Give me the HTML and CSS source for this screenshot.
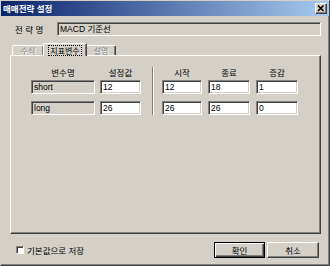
FILE: index.html
```html
<!DOCTYPE html>
<html lang="ko">
<head>
    <meta charset="UTF-8">
    <title>매매전략 설정</title>
    <link rel="stylesheet" href="styles.css">
</head>
<body>
    <div class="window">
        <div class="titlebar">
            <span class="title">매매전략 설정</span>
            <div class="close-btn">
                <svg width="10" height="9" viewBox="0 0 10 9">
                    <path d="M2 1.5 L7.5 7 M7.5 1.5 L2 7" stroke="#000" stroke-width="1.6" fill="none"/>
                </svg>
            </div>
        </div>

        <div class="name-row">
            <label class="name-label">전 략 명</label>
            <div class="name-input">MACD 기준선</div>
        </div>

        <div class="tabs">
            <div class="tab tab-formula">수식</div>
            <div class="tab tab-params active"><span class="focus">지표변수</span></div>
            <div class="tab tab-desc">설명</div>
        </div>

        <div class="panel">
            <div class="params">
                <div class="group group-left">
                    <div class="head-row">
                        <span class="col-name">변수명</span>
                        <span class="col-val">설정값</span>
                    </div>
                    <div class="field-row">
                        <div class="field readonly col-name">short</div>
                        <div class="field col-val">12</div>
                    </div>
                    <div class="field-row second">
                        <div class="field readonly col-name">long</div>
                        <div class="field col-val">26</div>
                    </div>
                </div>

                <div class="vsep"></div>

                <div class="group group-right">
                    <div class="head-row">
                        <span class="col-start">시작</span>
                        <span class="col-end">종료</span>
                        <span class="col-step">증감</span>
                    </div>
                    <div class="field-row">
                        <div class="field col-start">12</div>
                        <div class="field col-end">18</div>
                        <div class="field col-step">1</div>
                    </div>
                    <div class="field-row second">
                        <div class="field col-start">26</div>
                        <div class="field col-end">26</div>
                        <div class="field col-step">0</div>
                    </div>
                </div>
            </div>
        </div>

        <div class="bottom-row">
            <div class="checkbox"></div>
            <span class="check-label">기본값으로 저장</span>
            <div class="buttons">
                <button class="btn default ok">확인</button>
                <button class="btn cancel">취소</button>
            </div>
        </div>
    </div>
</body>
</html>
```

FILE: styles.css
```css
body {
    margin: 0;
    font-family: "Noto Sans CJK KR", sans-serif;
    font-size: 8.5px;
    color: #000;
}

.window {
    width: 330px;
    height: 266px;
    box-sizing: border-box;
    background-color: #d4d0c8;
    border: 1px solid;
    border-color: #d4d0c8 #404040 #404040 #d4d0c8;
    box-shadow: inset -1px -1px #808080;
}

.titlebar {
    display: flex;
    align-items: center;
    height: 15px;
    padding: 0 2px 0 2px;
    background: linear-gradient(to right, #0a246a, #a6caf0);
}

.title {
    color: #fff;
    font-weight: bold;
    line-height: 15px;
}

.close-btn {
    margin-left: auto;
    width: 12px;
    height: 11px;
    box-sizing: border-box;
    background-color: #d4d0c8;
    border: 1px solid;
    border-color: #fff #404040 #404040 #fff;
    box-shadow: inset -1px -1px #808080;
    display: flex;
    align-items: center;
    justify-content: center;
}

.close-btn svg {
    display: block;
}

.name-row {
    display: flex;
    align-items: center;
    margin-top: 6px;
    height: 14px;
    padding-left: 14px;
}

.name-label {
    width: 42px;
    line-height: 14px;
}

.name-input {
    width: 264px;
    height: 14px;
    box-sizing: border-box;
    border: 1px solid;
    border-color: #808080 #fff #fff #808080;
    box-shadow: inset 1px 1px #404040, inset -1px -1px #d4d0c8;
    font-family: "Liberation Sans", "Noto Sans CJK KR", sans-serif;
    font-size: 8.5px;
    line-height: 11px;
    padding: 1px 0 0 2px;
}

.tabs {
    display: flex;
    align-items: flex-end;
    height: 12px;
    margin-top: 7px;
    margin-left: 11px;
}

.tab {
    box-sizing: border-box;
    height: 10px;
    border: 1px solid;
    border-bottom: 0;
    border-color: #fff #404040 #fff #fff;
    box-shadow: inset -1px 0 #808080;
    border-radius: 2px 2px 0 0;
    display: flex;
    justify-content: center;
    align-items: center;
    font-size: 8px;
    line-height: 9px;
    color: #808080;
    text-shadow: 1px 1px #fff;
}

.tab-formula {
    width: 32px;
}

.tab-desc {
    width: 30px;
}

.tab.active {
    width: 44px;
    height: 13px;
    margin: 0 -1px -1px -1px;
    position: relative;
    z-index: 1;
    background-color: #d4d0c8;
    color: #000;
    text-shadow: none;
    align-items: flex-start;
    padding-top: 2px;
}

.focus {
    display: block;
    height: 9px;
    line-height: 9px;
    padding: 0 1px;
    outline: 1px dotted #000;
}

.panel {
    box-sizing: border-box;
    width: 311px;
    height: 179px;
    margin-left: 9px;
    border: 1px solid;
    border-color: #fff #404040 #404040 #fff;
    box-shadow: inset -1px -1px #808080;
}

.params {
    display: flex;
    padding: 10px 0 0 20px;
}

.group {
    display: flex;
    flex-direction: column;
}

.head-row,
.field-row {
    display: flex;
}

.group-left .head-row,
.group-left .field-row {
    gap: 5px;
}

.group-right .head-row,
.group-right .field-row {
    gap: 6px;
}

.head-row {
    height: 12px;
    line-height: 12px;
    margin-bottom: 2px;
}

.head-row span {
    text-align: center;
}

.field-row.second {
    margin-top: 7px;
}

.col-name { width: 64px; }
.col-val { width: 41px; }
.col-start { width: 40px; }
.col-end { width: 42px; }
.col-step { width: 42px; }

.field {
    box-sizing: border-box;
    height: 14px;
    border: 1px solid;
    border-color: #808080 #fff #fff #808080;
    box-shadow: inset 1px 1px #404040, inset -1px -1px #d4d0c8;
    background-color: #fff;
    font-family: "Liberation Sans", sans-serif;
    font-size: 8.5px;
    line-height: 11px;
    padding: 1px 0 0 2px;
}

.field.readonly {
    background-color: #d4d0c8;
}

.vsep {
    width: 0;
    margin: 1px 8px 0 11px;
    border-left: 1px solid #808080;
    border-right: 1px solid #fff;
}

.bottom-row {
    display: flex;
    align-items: center;
    height: 16px;
    margin-top: 8px;
    padding: 0 10px 0 15px;
}

.checkbox {
    width: 8px;
    height: 8px;
    box-sizing: border-box;
    background-color: #fff;
    border: 1px solid;
    border-color: #808080 #fff #fff #808080;
    box-shadow: inset 1px 1px #404040;
}

.check-label {
    margin-left: 3px;
    line-height: 12px;
}

.buttons {
    display: flex;
    gap: 2px;
    margin-left: auto;
}

.btn {
    box-sizing: border-box;
    height: 16px;
    padding: 0;
    background-color: #d4d0c8;
    border: 1px solid;
    border-color: #fff #404040 #404040 #fff;
    box-shadow: inset -1px -1px #808080;
    font-family: "Noto Sans CJK KR", sans-serif;
    font-size: 8.5px;
    line-height: 12px;
    color: #000;
}

.btn.default {
    border-color: #000;
    box-shadow: inset 1px 1px #fff, inset -1px -1px #404040, inset -2px -2px #808080;
}

.ok {
    width: 51px;
}

.cancel {
    width: 52px;
}
```
